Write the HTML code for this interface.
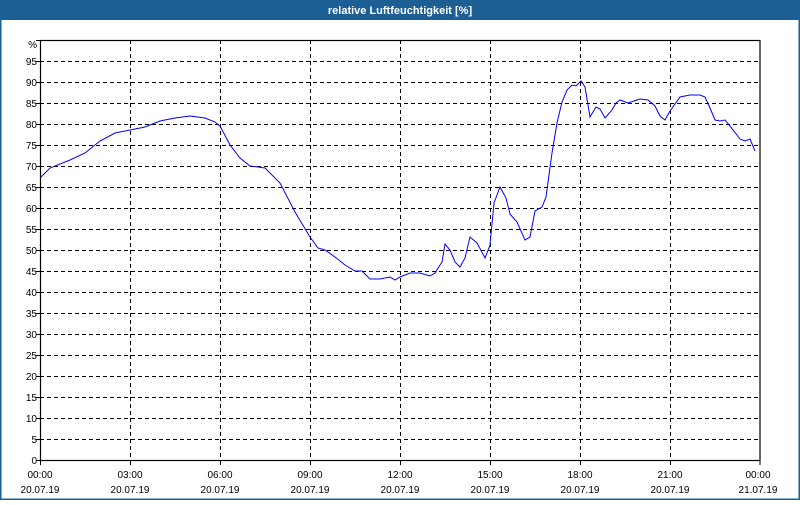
<!DOCTYPE html>
<html><head><style>
body{margin:0;width:800px;height:500px;overflow:hidden;background:#fff;font-family:"Liberation Sans",sans-serif}
</style></head><body>
<svg width="800" height="500" xmlns="http://www.w3.org/2000/svg" font-family="Liberation Sans, sans-serif" font-size="10">
<rect x="0" y="0" width="800" height="500" fill="#fff"/>
<rect x="0" y="0" width="800" height="20" fill="#1c5f94"/>
<rect x="0" y="0" width="1.5" height="500" fill="#1c5f94"/>
<rect x="798.5" y="0" width="1.5" height="500" fill="#1c5f94"/>
<rect x="0" y="498.5" width="800" height="1.5" fill="#1c5f94"/>
<text x="400" y="14" fill="#fff" font-weight="bold" font-size="11" text-anchor="middle">relative Luftfeuchtigkeit [%]</text>
<g stroke="#000" stroke-dasharray="4,3" stroke-width="1">
<path d="M40 61.5H760M40 82.5H760M40 103.5H760M40 124.5H760M40 145.5H760M40 166.5H760M40 187.5H760M40 208.5H760M40 229.5H760M40 250.5H760M40 271.5H760M40 292.5H760M40 313.5H760M40 334.5H760M40 355.5H760M40 376.5H760M40 397.5H760M40 418.5H760M40 439.5H760"/>
<path d="M130.5 40V460M220.5 40V460M310.5 40V460M400.5 40V460M490.5 40V460M580.5 40V460M670.5 40V460"/>
</g>
<rect x="40.5" y="40.5" width="719.5" height="420" fill="none" stroke="#000" stroke-width="1.2"/>
<g stroke="#000"><path d="M40.5 460v5M130.5 460v5M220.5 460v5M310.5 460v5M400.5 460v5M490.5 460v5M580.5 460v5M670.5 460v5M760 460v5M36 40.5h4M36 61.5h4M36 82.5h4M36 103.5h4M36 124.5h4M36 145.5h4M36 166.5h4M36 187.5h4M36 208.5h4M36 229.5h4M36 250.5h4M36 271.5h4M36 292.5h4M36 313.5h4M36 334.5h4M36 355.5h4M36 376.5h4M36 397.5h4M36 418.5h4M36 439.5h4M36 460.5h4"/></g>
<g fill="#000" text-anchor="end">
<text x="37" y="48">%</text><text x="37" y="65">95</text><text x="37" y="86">90</text><text x="37" y="107">85</text><text x="37" y="128">80</text><text x="37" y="149">75</text><text x="37" y="170">70</text><text x="37" y="191">65</text><text x="37" y="212">60</text><text x="37" y="233">55</text><text x="37" y="254">50</text><text x="37" y="275">45</text><text x="37" y="296">40</text><text x="37" y="317">35</text><text x="37" y="338">30</text><text x="37" y="359">25</text><text x="37" y="380">20</text><text x="37" y="401">15</text><text x="37" y="422">10</text><text x="37" y="443">5</text><text x="37" y="464">0</text>
</g>
<g fill="#000" text-anchor="middle">
<text x="40" y="478">00:00</text><text x="40" y="493">20.07.19</text>
<text x="130" y="478">03:00</text><text x="130" y="493">20.07.19</text>
<text x="220" y="478">06:00</text><text x="220" y="493">20.07.19</text>
<text x="310" y="478">09:00</text><text x="310" y="493">20.07.19</text>
<text x="400" y="478">12:00</text><text x="400" y="493">20.07.19</text>
<text x="490" y="478">15:00</text><text x="490" y="493">20.07.19</text>
<text x="580" y="478">18:00</text><text x="580" y="493">20.07.19</text>
<text x="670" y="478">21:00</text><text x="670" y="493">20.07.19</text>
<text x="758" y="478">00:00</text><text x="758" y="493">21.07.19</text>
</g>
<polyline fill="none" stroke="#0000ff" stroke-width="1" points="40,178 50,168 70,160 85,153 100,141 115,133 130,130 145,127 160,121 175,118 190,116 205,118 215,122 220,126 230,145 240,158 250,166 265,168 280,183 295,212 310,237 318,248 325,250 335,257 345,265 355,271 362,271 370,279 380,279 390,277 395,280 400,277 410,273 420,273 430,276 435,273 442,262 445,244 450,250 455,262 460,267 465,258 470,237 477,243 485,258 490,245 494,203 500,187 506,198 510,214 517,222 525,240 530,237 535,211 542,207 546,197 552,153 557,123 562,102 567,90 572,85 576,86 581,81 585,87 590,117 596,107 600,109 605,118 612,110 616,103 620,100 628,103 640,99 648,100 655,106 660,116 665,120 670,111 680,97 690,95 700,95 705,97 710,108 715,120 720,121 725,120 730,126 740,139 745,141 750,139 755,151"/>
</svg>
</body></html>
